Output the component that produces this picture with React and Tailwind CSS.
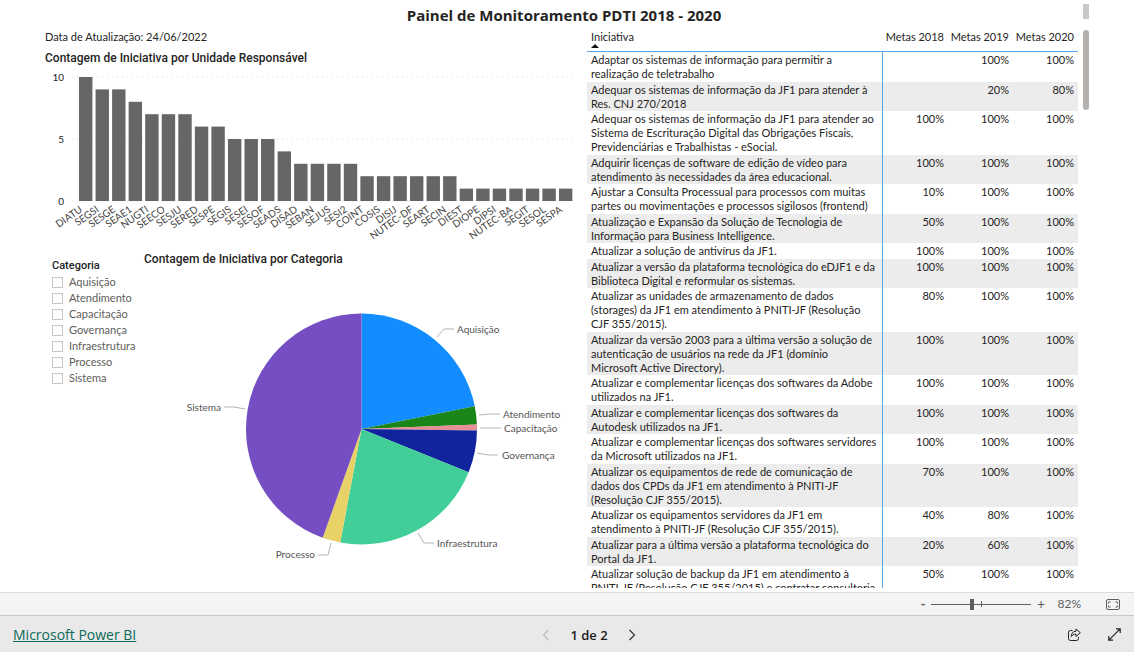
import React, { useState } from 'react'

const units = [
  ['DIATU', 10], ['SEGSI', 9], ['SESGE', 9], ['SEAE1', 8], ['NUGTI', 7], ['SEECO', 7],
  ['SESJU', 7], ['SERED', 6], ['SESPE', 6], ['SEGIS', 5], ['SESEI', 5], ['SESOF', 5],
  ['SEADS', 4], ['DISAD', 3], ['SEBAN', 3], ['SEJUS', 3], ['SESI2', 3], ['COINT', 2],
  ['COSIS', 2], ['DISIJ', 2], ['NUTEC-DF', 2], ['SEART', 2], ['SECIN', 2], ['DIEST', 1],
  ['DIOPE', 1], ['DIPSI', 1], ['NUTEC-BA', 1], ['SEGIT', 1], ['SESOL', 1], ['SESPA', 1],
]

const categories = [
  { name: 'Aquisição', value: 26, color: '#118DFF', line: '293,67 300,59 310,59', x: 313, y: 63 },
  { name: 'Atendimento', value: 3, color: '#1A8519', line: '335,145 346,144 356,144', x: 359, y: 148 },
  { name: 'Capacitação', value: 1, color: '#E68F96', line: '336,158 346,158 357,158', x: 360, y: 162 },
  { name: 'Governança', value: 7, color: '#12239E', line: '333,183 344,185 354,185', x: 358, y: 189 },
  { name: 'Infraestrutura', value: 26, color: '#41CE98', line: '274,263 280,273 290,273', x: 293, y: 277 },
  { name: 'Processo', value: 3, color: '#E8D166', line: '187,273 184,285 174,285', x: 171, y: 288, end: true },
  { name: 'Sistema', value: 53, color: '#744EC2', line: '101,139 90,137 80,137', x: 77, y: 141, end: true },
]

const rows = [
  ['Adaptar os sistemas de informação para permitir a realização de teletrabalho', '', '100%', '100%'],
  ['Adequar os sistemas de informação da JF1 para atender à Res. CNJ 270/2018', '', '20%', '80%'],
  ['Adequar os sistemas de informação da JF1 para atender ao Sistema de Escrituração Digital das Obrigações Fiscais, Previdenciárias e Trabalhistas - eSocial.', '100%', '100%', '100%'],
  ['Adquirir licenças de software de edição de vídeo para atendimento às necessidades da área educacional.', '100%', '100%', '100%'],
  ['Ajustar a Consulta Processual para processos com muitas partes ou movimentações e processos sigilosos (frontend)', '10%', '100%', '100%'],
  ['Atualização e Expansão da Solução de Tecnologia de Informação para Business Intelligence.', '50%', '100%', '100%'],
  ['Atualizar a solução de antivírus da JF1.', '100%', '100%', '100%'],
  ['Atualizar a versão da plataforma tecnológica do eDJF1 e da Biblioteca Digital e reformular os sistemas.', '100%', '100%', '100%'],
  ['Atualizar as unidades de armazenamento de dados (storages) da JF1 em atendimento à PNITI-JF (Resolução CJF\u00a0355/2015).', '80%', '100%', '100%'],
  ['Atualizar da versão 2003 para a última versão a solução de autenticação de usuários na rede da JF1 (domínio Microsoft\u00a0Active Directory).', '100%', '100%', '100%'],
  ['Atualizar e complementar licenças dos softwares da Adobe utilizados na JF1.', '100%', '100%', '100%'],
  ['Atualizar e complementar licenças dos softwares da Autodesk utilizados na JF1.', '100%', '100%', '100%'],
  ['Atualizar e complementar licenças dos softwares servidores da Microsoft utilizados na JF1.', '100%', '100%', '100%'],
  ['Atualizar os equipamentos de rede de comunicação de dados dos CPDs da JF1 em atendimento à PNITI-JF (Resolução CJF 355/2015).', '70%', '100%', '100%'],
  ['Atualizar os equipamentos servidores da JF1 em atendimento à PNITI-JF (Resolução CJF 355/2015).', '40%', '80%', '100%'],
  ['Atualizar para a última versão a plataforma tecnológica do Portal da JF1.', '20%', '60%', '100%'],
  ['Atualizar solução de backup da JF1 em atendimento à PNITI-JF (Resolução CJF 355/2015) e contratar consultoria', '50%', '100%', '100%'],
]

function BarChart() {
  const base = 134
  const unit = 12.4
  const step = 16.55
  return (
    <svg viewBox="0 0 542 178" className="block w-full" role="img" aria-label="Contagem de Iniciativa por Unidade Responsável">
      {[0, 5, 10].map(v => (
        <g key={v}>
          <line x1="27" x2="532" y1={base - v * unit} y2={base - v * unit} stroke="#d8d8d8" strokeDasharray="1 4" />
          <text x="19" y={base - v * unit + 4} textAnchor="end" className="fill-[#252423] text-[10px]">{v}</text>
        </g>
      ))}
      {units.map(([name, value], i) => {
        const x = 34 + i * step
        return (
          <g key={name}>
            <rect x={x} y={base - value * unit} width="13.4" height={value * unit} fill="#666666" />
            <text transform={`translate(${x + 4} 144) rotate(-35)`} textAnchor="end" className="fill-[#444444] text-[10px]">{name}</text>
          </g>
        )
      })}
    </svg>
  )
}

function PieChart() {
  const total = categories.reduce((sum, c) => sum + c.value, 0)
  const cx = 217.5
  const cy = 159
  const r = 115.5
  const point = v => {
    const a = (v / total) * 2 * Math.PI
    return `${cx + r * Math.sin(a)} ${cy - r * Math.cos(a)}`
  }
  let acc = 0
  return (
    <svg viewBox="0 0 443 300" className="mt-0.5 block w-full" role="img" aria-label="Contagem de Iniciativa por Categoria">
      {categories.map(c => {
        const start = point(acc)
        acc += c.value
        return (
          <g key={c.name}>
            <path d={`M${cx} ${cy} L${start} A${r} ${r} 0 ${c.value * 2 > total ? 1 : 0} 1 ${point(acc)} Z`} fill={c.color} />
            <polyline points={c.line} fill="none" stroke="#b3b3b3" />
            <text x={c.x} y={c.y} textAnchor={c.end ? 'end' : 'start'} className="fill-[#555555] text-[10px]">{c.name}</text>
          </g>
        )
      })}
    </svg>
  )
}

function Slicer() {
  const [selected, setSelected] = useState([])
  const toggle = name =>
    setSelected(p => (p.includes(name) ? p.filter(n => n !== name) : [...p, name]))
  return (
    <div role="group" aria-labelledby="slicer-title" className="w-[99px] shrink-0 pt-2 pl-[7px]">
      <h2 id="slicer-title" className="font-[Roboto,sans-serif] text-[11px] leading-4 font-medium text-[#252423]">Categoria</h2>
      {categories.map(c => (
        <label key={c.name} className="flex items-center gap-1.5 text-[11px] leading-4 text-[#605e5c]">
          <input
            type="checkbox"
            checked={selected.includes(c.name)}
            onChange={() => toggle(c.name)}
            className="size-[11px] shrink-0 appearance-none border border-[#c8c6c4] bg-white checked:bg-[#605e5c]"
          />
          {c.name}
        </label>
      ))}
    </div>
  )
}

function InitiativeTable() {
  return (
    <div className="min-h-0 min-w-0 flex-1 overflow-hidden">
      <table className="w-full table-fixed border-separate border-spacing-0 text-[11px] leading-[14px] text-[#252423]">
        <thead>
          <tr className="align-top">
            <th scope="col" className="border-b border-[#5aa6ee] px-1 pb-[3px] text-left font-normal">
              <button className="block cursor-pointer text-left">
                Iniciativa
                <svg viewBox="0 0 8 4" className="block h-1 w-2" aria-hidden="true"><path d="M4 0 8 4H0z" fill="#111" /></svg>
              </button>
            </th>
            {['Metas 2018', 'Metas 2019', 'Metas 2020'].map(h => (
              <th key={h} scope="col" className="w-[65px] border-b border-[#5aa6ee] pr-1 text-right font-normal whitespace-nowrap">{h}</th>
            ))}
          </tr>
        </thead>
        <tbody>
          {rows.map(([name, ...goals]) => (
            <tr key={name} className="align-top even:bg-[#ececec] odd:[&>td]:pb-px">
              <td className="border-r border-[#5aa6ee] pt-px pl-1">{name}</td>
              {goals.map((g, i) => (
                <td key={i} className="pt-px pr-1 text-right">{g}</td>
              ))}
            </tr>
          ))}
        </tbody>
      </table>
    </div>
  )
}

function ZoomBar() {
  const [zoom, setZoom] = useState(82)
  return (
    <div className="flex h-[23px] items-center justify-end border-t border-[#dcdcdc] bg-[#f4f4f4] pr-3.5 text-[#605e5c]">
      <button aria-label="Reduzir" onClick={() => setZoom(z => Math.max(0, z - 10))} className="w-3 text-center text-sm leading-4 font-bold">-</button>
      <div className="relative mx-0.5 flex h-3 w-[100px] items-center">
        <span className="absolute left-1/2 h-1.5 w-px bg-[#605e5c]" />
        <input
          type="range"
          aria-label="Zoom"
          min="0"
          max="200"
          value={zoom}
          onChange={e => setZoom(Number(e.target.value))}
          className="relative h-px w-full appearance-none bg-[#605e5c] [&::-webkit-slider-thumb]:h-[11px] [&::-webkit-slider-thumb]:w-1 [&::-webkit-slider-thumb]:appearance-none [&::-webkit-slider-thumb]:bg-[#605e5c]"
        />
      </div>
      <button aria-label="Ampliar" onClick={() => setZoom(z => Math.min(200, z + 10))} className="w-4 text-center text-sm leading-4">+</button>
      <span className="w-8 text-right text-xs">{zoom}%</span>
      <button aria-label="Ajustar à página" className="ml-[25px]">
        <svg viewBox="0 0 14 11" className="h-[11px] w-3.5" fill="none" stroke="#605e5c">
          <rect x=".5" y=".5" width="13" height="10" rx="1.5" />
          <path d="M4.5 3h-2v1.5M2.5 6.500V8h2M9.500 3h2v1.500M11.500 6.500V8h-2" />
        </svg>
      </button>
    </div>
  )
}

function Footer() {
  return (
    <footer className="grid h-[37px] grid-cols-3 items-center border-t border-[#c8c8c8] bg-[#e9e9e9] px-[13px] pt-px">
      <a href="#powerbi" className="justify-self-start font-['Open_Sans',sans-serif] text-sm leading-4 text-[#0b6a5a] underline">Microsoft Power BI</a>
      <nav className="flex items-center gap-5 justify-self-center pl-11">
        <button aria-label="Página anterior" disabled>
          <svg viewBox="0 0 8 12" className="h-3 w-2" fill="none" stroke="#bdbdbd" strokeWidth="1.2"><path d="M6.5 1 1.500 6l5 5" /></svg>
        </button>
        <span className="font-['Open_Sans',sans-serif] text-[13px] leading-4 font-semibold text-[#1a1a1a]">1 de 2</span>
        <button aria-label="Próxima página">
          <svg viewBox="0 0 8 12" className="h-3 w-2" fill="none" stroke="#333" strokeWidth="1.2"><path d="m1.5 1 5 5-5 5" /></svg>
        </button>
      </nav>
      <div className="flex items-center gap-[27px] justify-self-end">
        <button aria-label="Compartilhar">
          <svg viewBox="0 0 13 13" className="size-[13px]" fill="none" stroke="#222" strokeLinejoin="round">
            <path d="M4.5 2.500h-2a2 2 0 0 0-2 2v6a2 2 0 0 0 2 2h6a2 2 0 0 0 2-2V9" />
            <path d="M8 1v2.300C5.200 3.300 3.500 5 3.200 8.500 4.500 6.800 6 6.200 8 6.200v2.300l4.300-3.800z" />
          </svg>
        </button>
        <button aria-label="Tela inteira">
          <svg viewBox="0 0 13 13" className="size-[13px]" fill="none" stroke="#222" strokeWidth="1.2">
            <path d="M8 .8h4.200V5M12.200.8.8 12.200M.8 8v4.200H5" />
          </svg>
        </button>
      </div>
    </footer>
  )
}

export default function App() {
  return (
    <div className="flex h-screen flex-col overflow-hidden bg-white font-[Lato,sans-serif]">
      <main className="flex min-h-0 flex-1 flex-col overflow-hidden px-[45px] pb-1">
        <div className="flex items-start pt-1">
          <h1 className="flex-1 text-center font-['Open_Sans',sans-serif] text-[15px] leading-[23px] font-bold text-[#252423]">Painel de Monitoramento PDTI 2018 - 2020</h1>
          <div className="h-[15px] w-1.5 bg-[#c8c8c8]" />
        </div>

        <div className="grid min-h-0 flex-1 grid-cols-[542fr_502fr]">
          <section className="min-w-0 pt-0.5">
            <p className="text-[11px] leading-4 text-[#252423]">Data de Atualização: 24/06/2022</p>
            <h2 className="mt-1 font-[Roboto,sans-serif] text-xs leading-[18px] font-medium text-[#252423]">Contagem de Iniciativa por Unidade Responsável</h2>
            <BarChart />
            <div className="flex pt-[5px]">
              <Slicer />
              <div className="min-w-0 flex-1">
                <h2 className="font-[Roboto,sans-serif] text-xs leading-[18px] font-medium text-[#252423]">Contagem de Iniciativa por Categoria</h2>
                <PieChart />
              </div>
            </div>
          </section>

          <section className="flex min-h-0 min-w-0 gap-[5px] pt-[3px]">
            <InitiativeTable />
            <div className="h-20 w-1.5 rounded-full bg-[#b3b0ad]" />
          </section>
        </div>
      </main>
      <ZoomBar />
      <Footer />
    </div>
  )
}
